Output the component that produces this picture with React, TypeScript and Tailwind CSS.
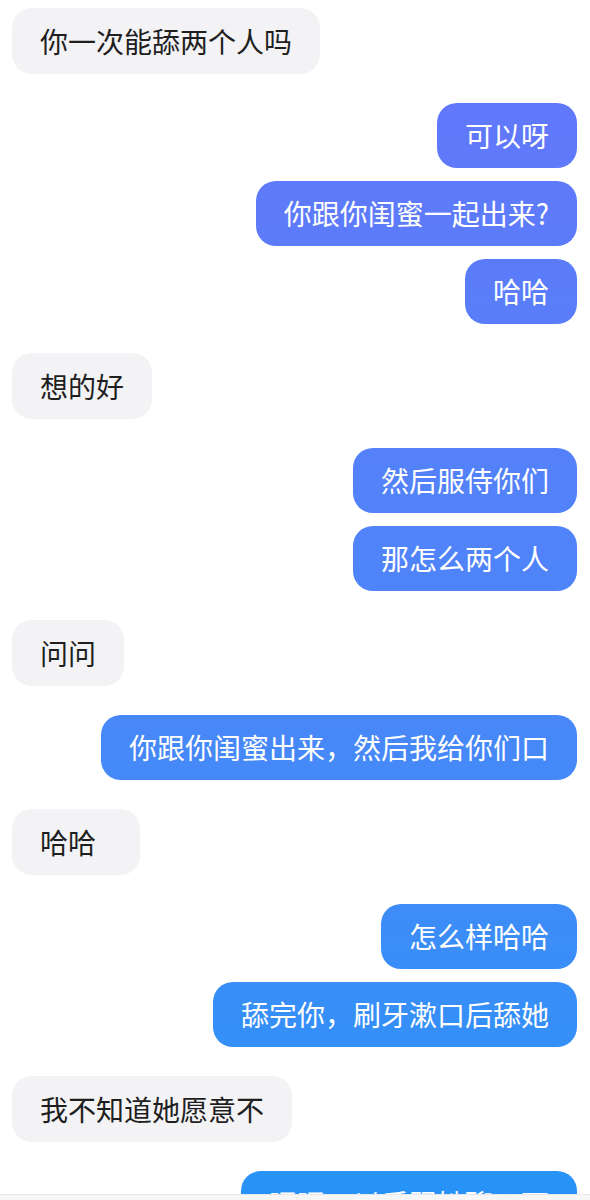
import React from "react";

type Msg = { text: string; me: boolean; extra?: string };

// grouped by sender, consecutive bubbles from the same side stay in one group
const GROUPS: Msg[][] = [
  [{ text: "你一次能舔两个人吗", me: false }],
  [
    { text: "可以呀", me: true },
    { text: "你跟你闺蜜一起出来?", me: true },
    { text: "哈哈", me: true },
  ],
  [{ text: "想的好", me: false }],
  [
    { text: "然后服侍你们", me: true },
    { text: "那怎么两个人", me: true },
  ],
  [{ text: "问问", me: false }],
  [{ text: "你跟你闺蜜出来，然后我给你们口", me: true }],
  [{ text: "哈哈", me: false, extra: "pr-[44px]" }],
  [
    { text: "怎么样哈哈", me: true },
    { text: "舔完你，刷牙漱口后舔她", me: true },
  ],
  [{ text: "我不知道她愿意不", me: false }],
  [{ text: "嘿嘿，以后跟她聊一下", me: true }],
];

const Bubble: React.FC<{ msg: Msg }> = ({ msg }) => {
  const base = "px-[28px] text-[28px] rounded-[20px] whitespace-nowrap";
  if (msg.me) {
    return (
      <div className="flex justify-end">
        <div
          className={`${base} py-[14px] leading-[37px] text-white bg-fixed bg-linear-to-b from-[#6475fb] to-[#2693f7]`}
        >
          {msg.text}
        </div>
      </div>
    );
  }
  return (
    <div className="flex justify-start">
      <div
        className={`${base} py-[14px] leading-[38px] bg-[#f3f3f5] text-[#1f1f1f] ${msg.extra ?? ""}`}
      >
        {msg.text}
      </div>
    </div>
  );
};

export default function App() {
  return (
    <div
      className="w-[590px] h-[1200px] flex flex-col bg-white overflow-hidden"
      style={{ fontFamily: '"Noto Sans CJK SC", "Noto Sans", sans-serif' }}
    >
      <div className="flex-1 overflow-hidden pt-[8px] pl-[12px] pr-[13px] flex flex-col gap-[29px]">
        {GROUPS.map((group, i) => (
          <div key={i} className="flex flex-col gap-[13px]">
            {group.map((m, j) => (
              <Bubble key={j} msg={m} />
            ))}
          </div>
        ))}
      </div>
      <div className="h-[6px] shrink-0 bg-[#f7f7f8] border-t border-[#e6e6e8]" />
    </div>
  );
}
